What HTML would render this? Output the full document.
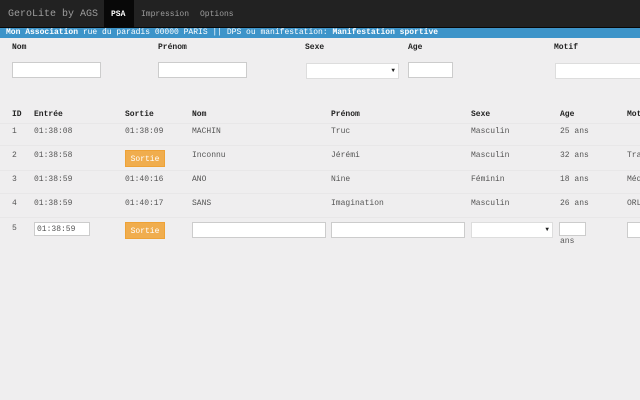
<!DOCTYPE html>
<html><head><meta charset="utf-8"><style>
*{margin:0;padding:0;box-sizing:border-box}
body{width:640px;height:400px;overflow:hidden;background:#efeeef;font-family:"Liberation Mono","DejaVu Sans Mono",monospace;font-size:8px;color:#555;position:relative}
.a{position:absolute;white-space:nowrap}
.nav{position:absolute;left:0;top:0;width:640px;height:28px;background:#222;border-bottom:1px solid #080808}
.bar{position:absolute;left:0;top:28px;width:640px;height:10px;background:#3d94c9;color:#fff;font-size:8px;line-height:10px;padding-left:6px;font-weight:bold}
.in{position:absolute;background:#fff;border:1px solid #ccc;height:16px}
.b{font-weight:bold;color:#222}
.btn{position:absolute;background:#f0ad4e;color:#fff;width:40px;height:17px;line-height:17px;text-align:center;border:1px solid #eea236}
.hl{position:absolute;left:0;width:640px;height:1px;background:#e8e7e8}
</style></head><body>
<div class="nav"></div>
<div class="a" style="left:8px;top:9px;font-size:10px;color:#9d9d9d">GeroLite by AGS</div>
<div style="position:absolute;left:104px;top:0;width:30px;height:28px;background:#080808"></div>
<div class="a" style="left:111px;top:10px;color:#fff;font-weight:bold">PSA</div>
<div class="a" style="left:141px;top:10px;color:#9d9d9d">Impression</div>
<div class="a" style="left:200px;top:10px;color:#9d9d9d">Options</div>
<div class="bar">Mon Association <span style="font-weight:normal">rue du paradis 00000 PARIS || DPS ou manifestation:</span> Manifestation sportive</div>

<div class="a b" style="left:12px;top:43px">Nom</div>
<div class="a b" style="left:158px;top:43px">Prénom</div>
<div class="a b" style="left:305px;top:43px">Sexe</div>
<div class="a b" style="left:408px;top:43px">Age</div>
<div class="a b" style="left:554px;top:43px">Motif</div>
<div class="in" style="left:12px;top:62px;width:89px"></div>
<div class="in" style="left:158px;top:62px;width:89px"></div>
<div class="in" style="left:306px;top:63px;width:93px;border-color:#ddd"><span class="a" style="right:3px;top:3px;font-size:6px;color:#222">▼</span></div>
<div class="in" style="left:408px;top:62px;width:45px"></div>
<div class="in" style="left:555px;top:63px;width:90px;border-color:#ddd"></div>

<div class="a b" style="left:12px;top:110px">ID</div>
<div class="a b" style="left:34px;top:110px">Entrée</div>
<div class="a b" style="left:125px;top:110px">Sortie</div>
<div class="a b" style="left:192px;top:110px">Nom</div>
<div class="a b" style="left:331px;top:110px">Prénom</div>
<div class="a b" style="left:471px;top:110px">Sexe</div>
<div class="a b" style="left:560px;top:110px">Age</div>
<div class="a b" style="left:627px;top:110px">Motif</div>
<div class="hl" style="top:123px"></div>

<div class="a" style="left:12px;top:127px">1</div><div class="a" style="left:34px;top:127px">01:38:08</div><div class="a" style="left:125px;top:127px">01:38:09</div><div class="a" style="left:192px;top:127px">MACHIN</div><div class="a" style="left:331px;top:127px">Truc</div><div class="a" style="left:471px;top:127px">Masculin</div><div class="a" style="left:560px;top:127px">25 ans</div>
<div class="hl" style="top:145px"></div>
<div class="a" style="left:12px;top:151px">2</div><div class="a" style="left:34px;top:151px">01:38:58</div><div class="btn" style="left:125px;top:150px">Sortie</div><div class="a" style="left:192px;top:151px">Inconnu</div><div class="a" style="left:331px;top:151px">Jérémi</div><div class="a" style="left:471px;top:151px">Masculin</div><div class="a" style="left:560px;top:151px">32 ans</div><div class="a" style="left:627px;top:151px">Tra</div>
<div class="hl" style="top:170px"></div>
<div class="a" style="left:12px;top:175px">3</div><div class="a" style="left:34px;top:175px">01:38:59</div><div class="a" style="left:125px;top:175px">01:40:16</div><div class="a" style="left:192px;top:175px">ANO</div><div class="a" style="left:331px;top:175px">Nine</div><div class="a" style="left:471px;top:175px">Féminin</div><div class="a" style="left:560px;top:175px">18 ans</div><div class="a" style="left:627px;top:175px">Méd</div>
<div class="hl" style="top:193px"></div>
<div class="a" style="left:12px;top:199px">4</div><div class="a" style="left:34px;top:199px">01:38:59</div><div class="a" style="left:125px;top:199px">01:40:17</div><div class="a" style="left:192px;top:199px">SANS</div><div class="a" style="left:331px;top:199px">Imagination</div><div class="a" style="left:471px;top:199px">Masculin</div><div class="a" style="left:560px;top:199px">26 ans</div><div class="a" style="left:627px;top:199px">ORL</div>
<div class="hl" style="top:217px"></div>
<div class="a" style="left:12px;top:224px">5</div>
<div class="in" style="left:34px;top:222px;width:56px;height:14px;padding:2px"><span style="color:#555">01:38:59</span></div>
<div class="btn" style="left:125px;top:222px">Sortie</div>
<div class="in" style="left:192px;top:222px;width:134px"></div>
<div class="in" style="left:331px;top:222px;width:134px"></div>
<div class="in" style="left:471px;top:222px;width:82px;border-color:#ddd"><span class="a" style="right:3px;top:3px;font-size:6px;color:#222">▼</span></div>
<div class="in" style="left:559px;top:222px;width:27px;height:14px"></div>
<div class="a" style="left:560px;top:237px">ans</div>
<div class="in" style="left:627px;top:222px;width:20px"></div>
</body></html>
